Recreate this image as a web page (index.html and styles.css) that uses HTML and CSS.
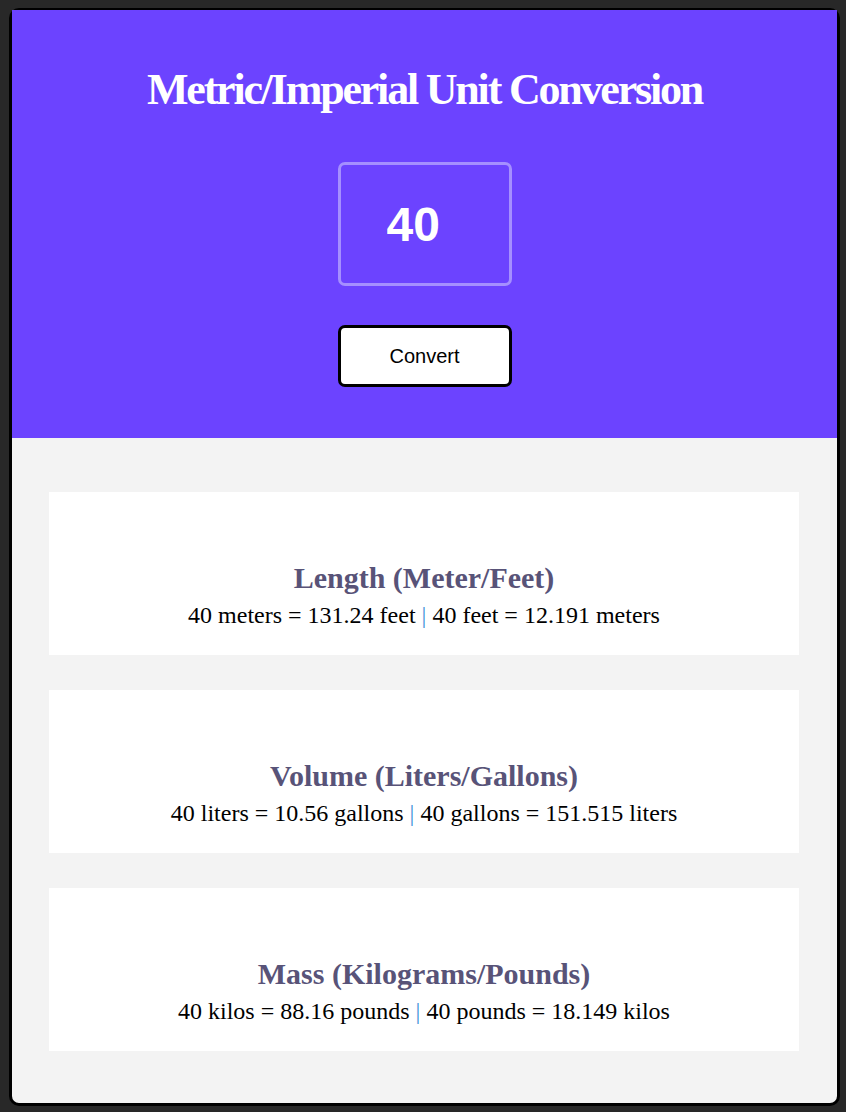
FILE: index.html
```html
<!DOCTYPE html>
<html lang="en">
<head>
<meta charset="utf-8">
<title>Metric/Imperial Unit Conversion</title>
<link rel="stylesheet" href="styles.css">
</head>
<body>
<main class="app">
  <header class="hero">
    <h1 class="title">Metric/Imperial Unit Conversion</h1>
    <input class="num-input" type="text" value="40">
    <button class="convert-btn" type="button">Convert</button>
  </header>
  <section class="results">
    <div class="card">
      <h2 class="card-title">Length (Meter/Feet)</h2>
      <p class="card-text">40 meters = 131.24 feet <span class="sep">|</span> 40 feet = 12.191 meters</p>
    </div>
    <div class="card">
      <h2 class="card-title">Volume (Liters/Gallons)</h2>
      <p class="card-text">40 liters = 10.56 gallons <span class="sep">|</span> 40 gallons = 151.515 liters</p>
    </div>
    <div class="card">
      <h2 class="card-title">Mass (Kilograms/Pounds)</h2>
      <p class="card-text">40 kilos = 88.16 pounds <span class="sep">|</span> 40 pounds = 18.149 kilos</p>
    </div>
  </section>
</main>
</body>
</html>
```

FILE: styles.css
```css
html, body {
  background: #282828;
}
body {
  margin: 8px 6px 6px 9px;
  font-family: "Liberation Serif", "Times New Roman", serif;
}
.app {
  border: 3px solid #000;
  border-top-width: 2px;
  border-radius: 10px;
  background: #f3f3f3;
}
.hero {
  background: #6c43ff;
  height: 428px;
  display: flex;
  flex-direction: column;
  align-items: center;
  box-sizing: border-box;
  padding-top: 56px;
}
.title {
  margin: 0;
  color: #fff;
  font-size: 44px;
  line-height: 48px;
  font-weight: bold;
  letter-spacing: -2.2px;
}
.num-input {
  margin-top: 48px;
  width: 174px;
  height: 124px;
  box-sizing: border-box;
  border: 3px solid #a58fff;
  border-radius: 7px;
  background: transparent;
  color: #fff;
  font-family: "Liberation Sans", Arial, sans-serif;
  font-weight: bold;
  font-size: 48px;
  padding: 0 0 0 46px;
  outline: none;
}
.convert-btn {
  margin-top: 39px;
  width: 174px;
  height: 62px;
  box-sizing: border-box;
  background: #fff;
  border: 3px solid #000;
  border-radius: 7px;
  font-family: "Liberation Sans", Arial, sans-serif;
  font-size: 20px;
  color: #000;
}
.results {
  padding: 54px 38px 52px 37px;
  display: flex;
  flex-direction: column;
  gap: 35px;
}
.card {
  background: #fff;
  height: 163px;
  box-sizing: border-box;
  padding-top: 69px;
  text-align: center;
}
.card-title {
  margin: 0;
  color: #585378;
  font-size: 30px;
  line-height: 34px;
  font-weight: bold;
}
.card-text {
  margin: 6px 0 0;
  font-size: 24px;
  line-height: 28px;
  color: #000;
}
.sep {
  color: #3b8fd9;
}
```
